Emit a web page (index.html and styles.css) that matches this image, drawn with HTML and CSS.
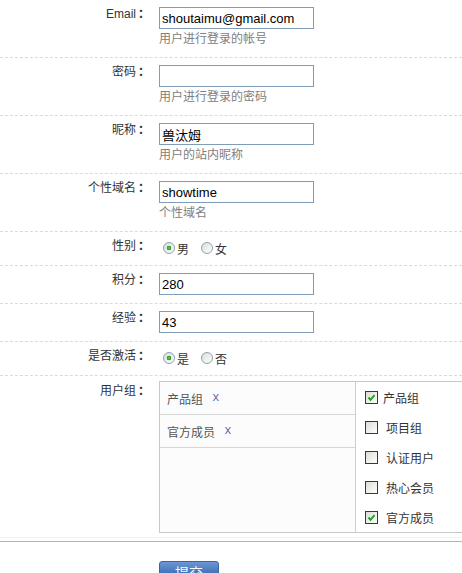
FILE: index.html
```html
<!DOCTYPE html>
<html lang="zh-CN">
<head>
<meta charset="UTF-8">
<meta name="viewport" content="width=device-width, initial-scale=1.0">
<title>编辑用户</title>
<link rel="stylesheet" href="styles.css">
</head>
<body>

<form class="profile">
  <div class="row tall">
    <div class="label">Email<span class="colon">：</span></div>
    <div class="field">
      <input class="text" value="shoutaimu@gmail.com">
      <p class="hint">用户进行登录的帐号</p>
    </div>
  </div>

  <div class="row tall">
    <div class="label">密码<span class="colon">：</span></div>
    <div class="field">
      <input class="text" type="password" value="">
      <p class="hint">用户进行登录的密码</p>
    </div>
  </div>

  <div class="row tall">
    <div class="label">昵称<span class="colon">：</span></div>
    <div class="field">
      <input class="text" value="兽汰姆">
      <p class="hint">用户的站内昵称</p>
    </div>
  </div>

  <div class="row tall">
    <div class="label">个性域名<span class="colon">：</span></div>
    <div class="field">
      <input class="text" value="showtime">
      <p class="hint">个性域名</p>
    </div>
  </div>

  <div class="row">
    <div class="label">性别<span class="colon">：</span></div>
    <div class="field choices">
      <label class="choice"><span class="radio on"></span>男</label>
      <label class="choice"><span class="radio"></span>女</label>
    </div>
  </div>

  <div class="row">
    <div class="label">积分<span class="colon">：</span></div>
    <div class="field"><input class="text" value="280"></div>
  </div>

  <div class="row">
    <div class="label">经验<span class="colon">：</span></div>
    <div class="field"><input class="text" value="43"></div>
  </div>

  <div class="row">
    <div class="label">是否激活<span class="colon">：</span></div>
    <div class="field choices">
      <label class="choice"><span class="radio on"></span>是</label>
      <label class="choice"><span class="radio"></span>否</label>
    </div>
  </div>

  <div class="row group">
    <div class="label">用户组<span class="colon">：</span></div>
    <div class="field">
      <div class="groups">
        <ul class="picked">
          <li>产品组 <a class="remove" href="#">x</a></li>
          <li>官方成员 <a class="remove" href="#">x</a></li>
        </ul>
        <ul class="options">
          <li class="first"><span class="box on"><svg viewBox="0 0 11 11"><path d="M2.5 5.5 L4.5 7.8 L8.6 3.2" /></svg></span>产品组</li>
          <li><span class="box"></span>项目组</li>
          <li><span class="box"></span>认证用户</li>
          <li><span class="box"></span>热心会员</li>
          <li><span class="box on"><svg viewBox="0 0 11 11"><path d="M2.5 5.5 L4.5 7.8 L8.6 3.2" /></svg></span>官方成员</li>
        </ul>
      </div>
    </div>
  </div>

  <div class="actions">
    <button type="submit" class="submit">提交</button>
  </div>
</form>

</body>
</html>
```

FILE: styles.css
```css
html { overflow: hidden; }
body {
  margin: 0; background: #fff; color: #333;
  font-family: "Liberation Sans", Arial, "Noto Sans CJK SC", sans-serif;
  font-size: 12px;
}

/* 表单行 */
.row {
  display: flex; align-items: flex-start;
  padding: 7px 0 8px;
  border-bottom: 1px dashed #dadada;
}
.row.tall { padding-bottom: 10px; }
.label {
  width: 150px; margin-right: 9px; flex: none;
  text-align: right; line-height: 14px; color: #333;
}
.colon { margin-left: 2px; font-weight: bold; }
.field { flex: none; }

.text {
  display: block; box-sizing: border-box;
  width: 155px; height: 22px; margin: 0; padding: 0 2px;
  border: 1px solid #7f9db9; background: #fff; color: #000;
  font-family: "Liberation Sans", Arial, "Noto Sans CJK SC", sans-serif;
  font-size: 13px; outline: none;
}
.hint { margin: 2px 0 0; line-height: 16px; color: #808080; }

/* 单选 */
.choices { display: flex; align-items: center; height: 18px; }
.choice { display: flex; align-items: center; margin-right: 8px; color: #333; }
.radio {
  display: inline-block; box-sizing: border-box;
  width: 12px; height: 12px; margin: 0 2px 0 4px;
  border: 1px solid #8ba2b8; border-radius: 50%;
  background: linear-gradient(135deg, #dcdcd6, #fff);
}
.radio.on {
  background:
    radial-gradient(circle, #5fd35f 0, #23a023 2px, transparent 2.6px),
    linear-gradient(135deg, #dcdcd6, #fff);
}

/* 用户组 */
.row.group { padding: 5px 0 4px; border-bottom: 1px solid #f2f2f2; }
.row.group .label { margin-top: 3px; }
.groups { display: flex; border: 1px solid #c8c8c8; height: 150px; }
.groups ul { list-style: none; margin: 0; padding: 0; }

.picked { width: 195px; background: #fcfcfc; border-right: 1px solid #cfcfcf; }
.picked li {
  display: flex; align-items: center; height: 32px;
  padding-left: 7px; border-bottom: 1px solid #d6d6d6;
  color: #555; white-space: pre;
}
.remove {
  margin-left: 6px; color: #5c68aa; text-decoration: none;
  font-family: "Liberation Mono", monospace; font-size: 12px;
}

.options { width: 140px; background: #fff; }
.options li {
  display: flex; align-items: center; height: 30px;
  padding-left: 9px; color: #333;
}
.box {
  display: inline-block; box-sizing: border-box;
  width: 13px; height: 13px; margin-right: 8px;
  border: 1px solid #1c3f60;
  background: linear-gradient(135deg, #dcdcd6, #fff);
}
.options li.first .box { margin-right: 5px; }
.box svg { display: block; width: 11px; height: 11px; }
.box path { fill: none; stroke: #21a121; stroke-width: 2; }

/* 提交 */
.actions {
  margin-top: 3px; padding: 19px 0 0 159px;
  border-top: 1px solid #a3b8c1;
}
.submit {
  width: 60px; height: 24px; padding: 0;
  border: 1px solid #3a65a5; border-radius: 3px;
  background: linear-gradient(#6c97d4, #4676bd 45%, #3e6cb2);
  color: #fff; font-size: 14px; line-height: 22px;
  font-family: "Liberation Sans", "Noto Sans CJK SC", sans-serif;
  cursor: pointer;
}
```
